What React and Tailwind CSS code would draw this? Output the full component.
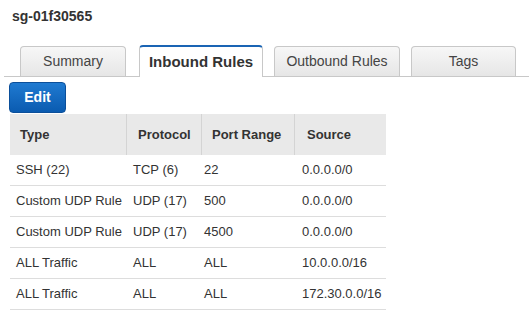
const rows = [
  ["SSH (22)", "TCP (6)", "22", "0.0.0.0/0"],
  ["Custom UDP Rule", "UDP (17)", "500", "0.0.0.0/0"],
  ["Custom UDP Rule", "UDP (17)", "4500", "0.0.0.0/0"],
  ["ALL Traffic", "ALL", "ALL", "10.0.0.0/16"],
  ["ALL Traffic", "ALL", "ALL", "172.30.0.0/16"],
];

const Tab = ({ label, width, active }) =>
  active ? (
    <div
      className={`${width} h-[32px] -mb-px flex items-center justify-center bg-white border-x border-[#c8c8c8] border-t-[2px] border-t-[#1a64b4] rounded-t-[4px] text-[15px] font-bold text-[#333]`}
    >
      {label}
    </div>
  ) : (
    <div
      className={`${width} h-[30px] flex items-center justify-center bg-gradient-to-b from-[#f7f7f7] to-[#e6e6e6] border border-b-0 border-[#c8c8c8] rounded-t-[4px] text-[14px] text-[#444]`}
    >
      {label}
    </div>
  );

export default function App() {
  return (
    <div className="w-[529px] h-[314px] bg-white overflow-hidden font-['Liberation_Sans',Arial,sans-serif] text-[#333]">
      {/* Title */}
      <div className="pt-[8px] pl-3 h-[24px] leading-[16px] text-[14px] font-bold text-[#333]">
        sg-01f30565
      </div>

      {/* Tabs */}
      <div className="mt-[21px] ml-[4px] pl-[16px] flex items-end border-b border-[#c8c8c8]">
        <Tab label="Summary" width="w-[106px]" />
        <div className="w-[13px]" />
        <Tab label="Inbound Rules" width="w-[124px]" active />
        <div className="w-[11px]" />
        <Tab label="Outbound Rules" width="w-[126px]" />
        <div className="w-[11px]" />
        <Tab label="Tags" width="w-[105px]" />
      </div>

      {/* Edit */}
      <div className="ml-[9px] mt-[5px]">
        <button className="w-[57px] h-[31px] rounded-[4px] border border-[#0b4f9a] bg-gradient-to-b from-[#1f7ad1] to-[#0a5bb0] text-white text-[14px] font-bold">
          Edit
        </button>
      </div>

      {/* Table */}
      <div className="ml-[10px] mt-px w-[376px] text-[13px]">
        <div className="grid grid-cols-[117px_75px_93px_91px] h-[41px] bg-[#e9e9e9] font-bold text-[#333]">
          <div className="flex items-center pl-[10px] border-r border-[#d4d4d4]">Type</div>
          <div className="flex items-center pl-[11px] border-r border-[#d4d4d4]">Protocol</div>
          <div className="flex items-center pl-[10px] border-r border-[#d4d4d4]">Port Range</div>
          <div className="flex items-center pl-[12px]">Source</div>
        </div>
        {rows.map((r, i) => (
          <div
            key={i}
            className="grid grid-cols-[117px_75px_93px_91px] h-[31px] border-b border-[#dddddd] text-[#333]"
          >
            <div className="flex items-center pl-[6px]">{r[0]}</div>
            <div className="flex items-center pl-[6px]">{r[1]}</div>
            <div className="flex items-center pl-[2px]">{r[2]}</div>
            <div className="flex items-center pl-[7px]">{r[3]}</div>
          </div>
        ))}
      </div>
    </div>
  );
}
